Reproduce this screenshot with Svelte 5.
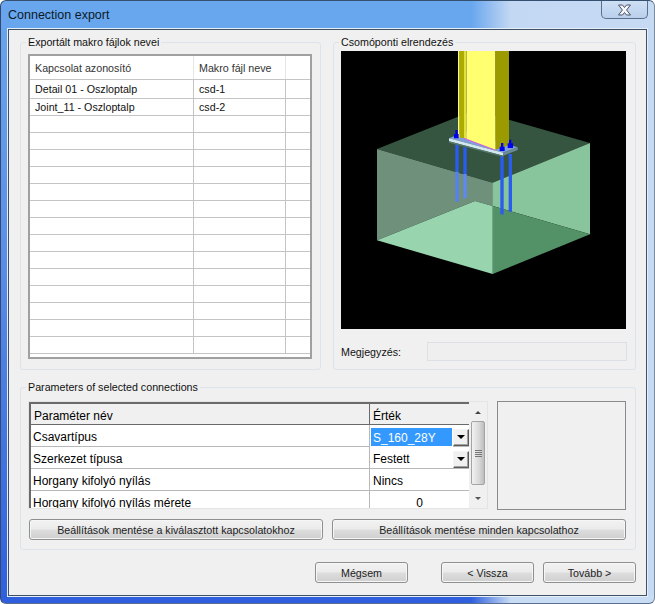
<script lang="ts">
	const rows = [
		['Detail 01 - Oszloptalp', 'csd-1'],
		['Joint_11 - Oszloptalp', 'csd-2'],
		...Array.from({ length: 14 }, () => ['', ''])
	];
	const params = [
		{ name: 'Csavartípus', value: 'S_160_28Y', kind: 'selected' },
		{ name: 'Szerkezet típusa', value: 'Festett', kind: 'combo' },
		{ name: 'Horgany kifolyó nyílás', value: 'Nincs', kind: 'text' },
		{ name: 'Horgany kifolyó nyílás mérete', value: '0', kind: 'num' }
	];
</script>

<div class="window">
	<div class="titlebar">
		<span class="title">Connection export</span>
		<button class="close" aria-label="Close">
			<svg width="15" height="12" viewBox="0 0 15 12">
				<path d="M1.5 1 H5.5 L7.5 3.5 L9.5 1 H13.5 L9.6 6 L13.5 11 H9.5 L7.5 8.5 L5.5 11 H1.5 L5.4 6 Z" fill="#f4f6f8" stroke="#4a5568" stroke-width="1" />
			</svg>
		</button>
	</div>

	<div class="client">
		<div class="top">
			<fieldset class="group">
				<legend>Exportált makro fájlok nevei</legend>
				<div class="list">
					<div class="list-head">
						<span class="c1">Kapcsolat azonosító</span>
						<span class="c2">Makro fájl neve</span>
						<span class="c3"></span>
					</div>
					{#each rows as row}
						<div class="list-row">
							<span class="c1">{row[0]}</span>
							<span class="c2">{row[1]}</span>
							<span class="c3"></span>
						</div>
					{/each}
				</div>
			</fieldset>

			<fieldset class="group right">
				<legend>Csomóponti elrendezés</legend>
				<svg class="preview" width="285" height="278" viewBox="3 3 855 834">
					<rect x="3" y="3" width="855" height="834" fill="#000" />
					<!-- block -->
					<polygon points="111,297 405,180 750,279 458,398" fill="#355540" />
					<polygon points="111,297 458,398 458,468 405,453 111,571" fill="#6f917c" />
					<polygon points="111,571 405,453 458,468 458,672" fill="#98d5ae" />
					<polygon points="458,398 750,279 750,553 458,468" fill="#88c49c" />
					<polygon points="458,468 750,553 458,672" fill="#539267" />
					<line x1="458" y1="398" x2="458" y2="672" stroke="#7fb594" stroke-width="2" />
					<!-- anchor rods -->
					<rect x="346" y="283" width="10" height="82" fill="#2a5cf0" />
					<rect x="346" y="365" width="10" height="90" fill="#5680ee" />
					<rect x="370" y="292" width="10" height="80" fill="#2a5cf0" />
					<rect x="370" y="372" width="10" height="73" fill="#5f88f0" />
					<rect x="481" y="318" width="10" height="175" fill="#2a5cf0" />
					<rect x="506" y="312" width="10" height="173" fill="#2a5cf0" />
					<!-- base plate -->
					<polygon points="327,265 375,245 533,292 490,308" fill="#7e9fd8" />
					<polygon points="327,265 490,308 490,317 327,274" fill="#d4e8f2" />
					<polygon points="327,274 490,317 490,321 327,278" fill="#56796a" />
					<polygon points="490,308 533,292 533,300 490,317" fill="#6d8a9a" />
					<polygon points="466,3 507,3 507,285 466,299" fill="#9b9b00" />
					<!-- column -->
					<polygon points="354,3 359,3 359,263 354,261" fill="#ffff70" />
					<polygon points="359,3 372,3 372,264 359,263" fill="#acac00" />
					<polygon points="372,3 380,3 380,267 372,264" fill="#e0e040" />
					<polygon points="380,3 466,3 466,299 380,267" fill="#ffff70" />
					<line x1="372" y1="265" x2="464" y2="300" stroke="#f050e0" stroke-width="2.5" />
					<!-- nuts -->
					<path d="M346 240h7v12h3v13h-14v-12h4z" fill="#0000f0" />
					<path d="M483 279h7v11h4v13h-15v-13h4z" fill="#0000f0" />
					<path d="M507 269h7v11h5v14h-16v-14h4z" fill="#0000f0" />
				</svg>
				<div class="note">
					<span>Megjegyzés:</span>
					<div class="note-box"></div>
				</div>
			</fieldset>
		</div>

		<fieldset class="group params">
			<legend>Parameters of selected connections</legend>
			<div class="params-top">
				<div class="grid">
					<div class="grid-body">
						<div class="grid-head">
							<span class="p1">Paraméter név</span>
							<span class="p2">Érték</span>
						</div>
						{#each params as p}
							<div class="grid-row">
								<span class="p1">{p.name}</span>
								<span class="p2 {p.kind}">
									<span class="val">{p.value}</span>
									{#if p.kind === 'selected' || p.kind === 'combo'}
										<span class="drop"><i></i></span>
									{/if}
								</span>
							</div>
						{/each}
					</div>
					<div class="scroll">
						<i class="up"></i>
						<div class="thumb"><b></b><b></b><b></b><b></b></div>
						<i class="down"></i>
					</div>
				</div>
				<div class="side-box"></div>
			</div>
			<div class="save-row">
				<button class="btn">Beállítások mentése a kiválasztott kapcsolatokhoz</button>
				<button class="btn">Beállítások mentése minden kapcsolathoz</button>
			</div>
		</fieldset>

		<div class="footer">
			<button class="btn cancel">Mégsem</button>
			<button class="btn nav">&lt; Vissza</button>
			<button class="btn nav">Tovább &gt;</button>
		</div>
	</div>
</div>

<style>
	:global(body) {
		margin: 0;
		background: #fff;
	}
	.window {
		width: 655px;
		height: 604px;
		box-sizing: border-box;
		padding: 0 7px 7px;
		display: flex;
		flex-direction: column;
		font-family: 'Liberation Sans', sans-serif;
		font-size: 10.7px;
		color: #111;
		background:
			linear-gradient(90deg, #2f5fdc 0, #2f5fdc 470px, #c8dcf4 510px) bottom / 100% 8px no-repeat,
			linear-gradient(180deg, #6aa6ee 0, #5c90e8 40%, #2f5fdc 100%) left / 8px 100% no-repeat,
			linear-gradient(90deg, #68a6ee 470px, #c3d8f3 510px, #c6daf4 100%);
		border: 1px solid;
		border-color: #35506e #7a8a9a #5a6f92 #33486e;
		border-radius: 6px;
	}
	.titlebar {
		height: 28px;
		flex: none;
		display: flex;
		justify-content: space-between;
		align-items: flex-start;
	}
	.title {
		font-size: 12.5px;
		line-height: 29px;
		color: #0c1a28;
	}
	.close {
		width: 47px;
		height: 18px;
		padding: 0;
		margin-right: -1px;
		display: flex;
		align-items: center;
		justify-content: center;
		background: linear-gradient(#cfe0f5, #b8cfec);
		border: 1px solid #5a6f8c;
		border-top: none;
		border-radius: 0 0 5px 5px;
	}
	.client {
		flex: 1;
		min-height: 0;
		box-sizing: border-box;
		background: #f0f0f0;
		border: 1px solid #3f5166;
		outline: 1px solid #e6eef8;
		padding: 5px 10px 0 11px;
		display: flex;
		flex-direction: column;
	}
	.top {
		display: flex;
		gap: 12px;
		height: 335px;
		flex: none;
	}
	fieldset.group {
		margin: 0;
		padding: 0;
		min-width: 0;
		box-sizing: border-box;
		border: 1px solid #dde3ea;
		border-radius: 3px;
	}
	legend {
		margin-left: 5px;
		padding: 0 2px;
		font-size: 10.7px;
		line-height: 15px;
	}
	.top .group {
		width: 301px;
		display: flex;
		flex-direction: column;
	}
	.top .right {
		width: 303px;
	}
	.list {
		margin: 4px 8px 0 7px;
		height: 305px;
		box-sizing: border-box;
		border: 2px solid #a0a0a0;
		background: #fff;
		overflow: hidden;
	}
	.list-head,
	.list-row {
		display: grid;
		grid-template-columns: 164px 92px 24px;
		border-bottom: 1px solid #c4c4c4;
	}
	.list-head {
		height: 23px;
		line-height: 24px;
		color: #333;
	}
	.list-head span {
		border-right: 1px solid #e6e6e6;
	}
	.list-row {
		height: 17px;
		box-sizing: border-box;
		line-height: 16px;
	}
	.list-row:nth-child(2) {
		height: 19px;
		line-height: 18px;
	}
	.list-row span {
		border-right: 1px solid #c4c4c4;
	}
	.c1,
	.c2 {
		padding-left: 5px;
		white-space: nowrap;
		overflow: hidden;
	}
	.c3 {
		border-right: none !important;
	}
	.preview {
		display: block;
		margin: 1px 0 0 7px;
		flex: none;
	}
	.note {
		display: grid;
		grid-template-columns: 86px 1fr;
		align-items: center;
		margin: 13px 8px 0 7px;
	}
	.note-box {
		height: 19px;
		box-sizing: border-box;
		border: 1px solid #dcdfe3;
		background: #efefef;
	}
	fieldset.params {
		margin-top: 10px;
		height: 170px;
		flex: none;
	}
	.params-top {
		display: flex;
		gap: 9px;
		margin: 6px 9px 0 7px;
	}
	.grid {
		width: 460px;
		height: 108px;
		box-sizing: border-box;
		display: flex;
		border: 1px solid #e4e4e4;
	}
	.grid-body {
		flex: 1;
		min-width: 0;
		height: 106px;
		overflow: hidden;
		background: #fff;
		border-top: 2px solid #6a6a6a;
		border-left: 2px solid #6a6a6a;
		box-sizing: border-box;
	}
	.grid-head,
	.grid-row {
		display: grid;
		grid-template-columns: 339px 99px;
		height: 22px;
		box-sizing: border-box;
		font-size: 12px;
		line-height: 24px;
		color: #000;
		border-bottom: 1px solid #b8b8b8;
	}
	.grid-head {
		background: #f0f0f0;
		height: 21px;
		border-bottom: 1px solid #6a6a6a;
	}
	.grid-head .p1 {
		border-right: 1px solid #6a6a6a;
		padding-left: 3px;
	}
	.grid-head .p2 {
		padding-left: 3px;
	}
	.p1 {
		padding-left: 2px;
		border-right: 1px solid #b8b8b8;
		white-space: nowrap;
	}
	.p2 {
		display: flex;
		justify-content: space-between;
		align-items: center;
		padding-left: 3px;
		min-width: 0;
	}
	.selected {
		padding: 0;
	}
	.selected .val {
		flex: 1;
		height: 20px;
		line-height: 21px;
		padding-left: 2px;
		background: #3399ff;
		color: #fff;
		border: 1px solid #fff;
		box-sizing: border-box;
	}
	.num {
		justify-content: center;
		padding-right: 3px;
	}
	.drop {
		width: 16px;
		height: 17px;
		flex: none;
		box-sizing: border-box;
		background: #f0f0f0;
		border: 1px solid;
		border-color: #f4f4f4 #5c5c5c #5c5c5c #f4f4f4;
		box-shadow: inset -1px -1px 0 #a0a0a0;
		display: flex;
		align-items: center;
		justify-content: center;
	}
	.drop i {
		border: 4px solid transparent;
		border-top: 4px solid #000;
		border-bottom: none;
	}
	.scroll {
		width: 18px;
		flex: none;
		background: #f0f0f0;
		display: flex;
		flex-direction: column;
		align-items: center;
		padding-top: 9px;
		box-sizing: border-box;
	}
	.scroll i {
		display: block;
		border: 3px solid transparent;
	}
	.scroll .up {
		border-top: none;
		border-bottom: 3px solid #444;
	}
	.scroll .down {
		border-bottom: none;
		border-top: 3px solid #555;
		margin-top: 12px;
	}
	.thumb {
		width: 14px;
		height: 64px;
		margin-top: 7px;
		box-sizing: border-box;
		border: 1px solid #a4a4a4;
		border-radius: 2px;
		background: linear-gradient(90deg, #f2f2f2, #d8d8d8 60%, #bdbdbd);
		display: flex;
		flex-direction: column;
		justify-content: center;
		align-items: center;
		gap: 1px;
	}
	.thumb b {
		display: block;
		width: 7px;
		height: 1px;
		background: #777;
	}
	.side-box {
		width: 129px;
		height: 109px;
		box-sizing: border-box;
		border: 1px solid #8a8a8a;
		background: #f0f0f0;
	}
	.save-row {
		display: flex;
		gap: 9px;
		margin: 9px 9px 0 8px;
	}
	.save-row .btn {
		width: 294px;
	}
	.btn {
		height: 21px;
		padding: 0;
		font-family: inherit;
		font-size: 10.7px;
		color: #222;
		border: 1px solid #8e8f8f;
		border-radius: 3px;
		background: linear-gradient(#f2f2f2 0, #ebebeb 48%, #dddddd 52%, #cfcfcf 100%);
		box-shadow: inset 0 0 0 1px #f6f6f6;
	}
	.footer {
		display: flex;
		margin-top: 12px;
	}
	.cancel {
		width: 93px;
		margin-left: 295px;
	}
	.nav {
		width: 93px;
	}
	.footer .nav:nth-child(2) {
		margin-left: 33px;
	}
	.footer .nav:nth-child(3) {
		margin-left: 9px;
	}
</style>
